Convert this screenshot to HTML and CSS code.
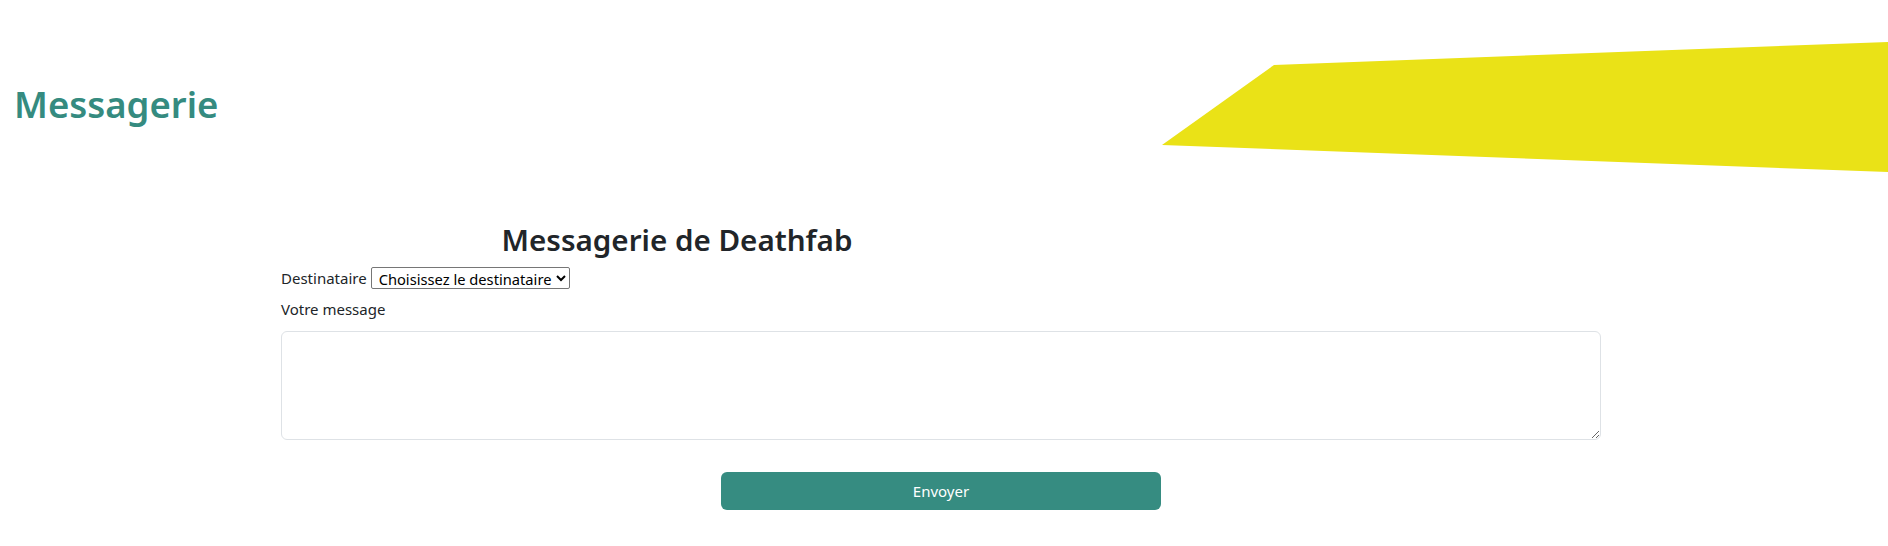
FILE: index.html
```html
<!DOCTYPE html>
<html lang="fr">
<head>
<meta charset="utf-8">
<title>Messagerie</title>
<link rel="stylesheet" href="styles.css">
</head>
<body>
<header class="site-header">
  <svg class="deco" width="1888" height="200" viewBox="0 0 1888 200" aria-hidden="true">
    <polygon points="1274,65 1900,41.5 1900,172.5 1162,145" fill="#eae217"/>
  </svg>
  <h1 class="site-title">Messagerie</h1>
</header>
<main class="page">
  <div class="title-wrap">
    <h2 class="page-title">Messagerie de Deathfab</h2>
  </div>
  <form class="msg-form" onsubmit="return false">
    <div class="dest-row">
      <label for="dest" class="lbl">Destinataire</label>
      <select id="dest" class="dest-select">
        <option>Choisissez le destinataire</option>
      </select>
    </div>
    <label for="msg" class="lbl block-lbl">Votre message</label>
    <textarea id="msg" class="msg-area" rows="4"></textarea>
    <div class="actions">
      <button type="submit" class="send-btn">Envoyer</button>
    </div>
  </form>
</main>
</body>
</html>
```
FILE: styles.css
```css
html, body {
  margin: 0;
  padding: 0;
  background: #ffffff;
}
body {
  font-family: "Noto Sans", "Open Sans", "DejaVu Sans", sans-serif;
  font-size: 15px;
  line-height: 24px;
  color: #212529;
}
.site-header {
  position: relative;
  padding: 80px 0 0 14px;
}
.deco {
  position: absolute;
  left: 0;
  top: 0;
  pointer-events: none;
}
.site-title {
  position: relative;
  margin: 0;
  font-size: 36.5px;
  line-height: 48px;
  font-weight: 600;
  color: #358b80;
}
.page {
  width: 1320px;
  margin: 94px 0 0 calc(50% - 663px);
}
.title-wrap {
  width: 60%;
  text-align: center;
}
.page-title {
  margin: 0;
  font-size: 29.6px;
  line-height: 36px;
  font-weight: 600;
  color: #212529;
}
.msg-form {
  margin: 0;
}
.dest-row {
  display: flex;
  align-items: center;
  gap: 4px;
  height: 24px;
  margin-top: 8px;
}
.lbl {
  color: #212529;
}
.dest-select {
  font-family: inherit;
  font-size: 14.7px;
  color: #000;
  width: 199px;
  height: 22px;
  padding: 0 0 0 3px;
  border: 1px solid #767676;
  border-radius: 2px;
  background: #fff;
}
.block-lbl {
  display: block;
  margin-top: 7px;
}
.msg-area {
  display: block;
  box-sizing: border-box;
  width: 100%;
  height: 109px;
  margin-top: 10px;
  padding: 6px 12px;
  font-family: inherit;
  font-size: 15px;
  border: 1px solid #dee2e6;
  border-radius: 6px;
  background: #fff;
}
.actions {
  display: flex;
  justify-content: center;
  margin-top: 32px;
}
.send-btn {
  width: 440px;
  height: 38px;
  border: none;
  border-radius: 6px;
  background: #368c81;
  color: #ffffff;
  font-family: inherit;
  font-size: 15px;
  cursor: pointer;
}
```
